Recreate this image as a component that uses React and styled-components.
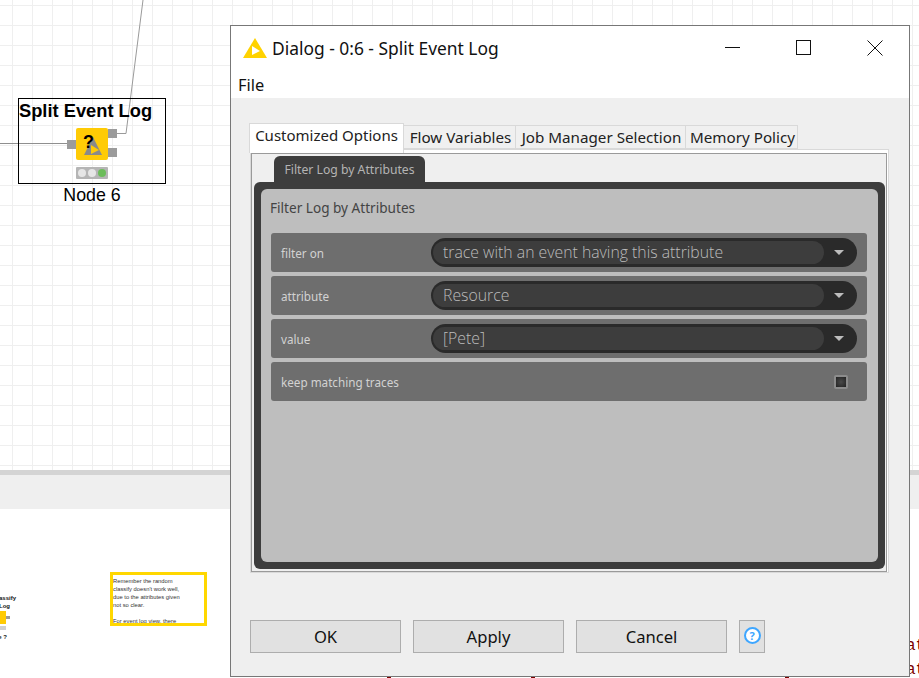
import React from "react";
import styled, { createGlobalStyle } from "styled-components";

const GlobalStyle = createGlobalStyle`
	html, body {
		margin: 0;
		padding: 0;
		background: #fff;
	}
	* {
		box-sizing: border-box;
	}
`;

const filas = [
    { nombre: "filter on", valor: "trace with an event having this attribute" },
    { nombre: "attribute", valor: "Resource" },
    { nombre: "value", valor: "[Pete]" },
];

const pestanas = [
    { nombre: "Flow Variables", ancho: 112 },
    { nombre: "Job Manager Selection", ancho: 170 },
    { nombre: "Memory Policy", ancho: 112 },
];

const NodoIcono = () => (
    <IconoNodo>
        <svg width="32" height="32" viewBox="0 0 32 32">
            <polygon points="17,9 26,27 8,27" fill="#8a8a8a" />
            <polygon points="15,17 23,22 15,26" fill="#ffcb05" />
        </svg>
        <Interrogacion>?</Interrogacion>
    </IconoNodo>
);

const App = () => {
    return (
        <Pagina>
            <GlobalStyle />
            <Lienzo>
                <Cables width="240" height="200" viewBox="0 0 240 200">
                    <path d="M0 143.5H67" stroke="#8f8f8f" fill="none" />
                    <path d="M116 133.5H126L143 0" stroke="#9a9a9a" fill="none" />
                </Cables>
                <CajaNodo>
                    <TituloNodo>Split Event Log</TituloNodo>
                    <FilaPuertos>
                        <Puerto />
                        <NodoIcono />
                        <PuertosDerecha>
                            <Puerto />
                            <Puerto />
                        </PuertosDerecha>
                    </FilaPuertos>
                    <Semaforo>
                        <Luz />
                        <Luz />
                        <Luz $verde />
                    </Semaforo>
                    <NombreNodo>Node 6</NombreNodo>
                </CajaNodo>
            </Lienzo>
            <Separador />
            <BandaClara />
            <ZonaBlanca>
                <NodoPequeno>
                    <b>classify</b>
                    <b>Log</b>
                    <FilaPequena>
                        <CuadroPequeno />
                        <PuertoPequeno />
                    </FilaPequena>
                    <SemaforoPequeno />
                    <b>e ?</b>
                </NodoPequeno>
                <Nota>
                    Remember the random<br />
                    classify doesn't work well,<br />
                    due to the attributes given<br />
                    not so clear.<br />
                    <br />
                    For event log view, there
                </Nota>
                <TextoRojo $arriba={636}>at</TextoRojo>
                <TextoRojo $arriba={660}>at</TextoRojo>
                <MarcaInferior $x={387} />
                <MarcaInferior $x={531} />
                <MarcaInferior $x={785} />
            </ZonaBlanca>

            <Dialogo>
                <BarraTitulo>
                    <svg width="26" height="22" viewBox="0 0 26 22">
                        <polygon points="13,1 25,21 1,21" fill="#ffd200" />
                        <polygon points="10,9 18,14 10,18" fill="#fff" />
                    </svg>
                    <Titulo>Dialog - 0:6 - Split Event Log</Titulo>
                    <ControlesVentana>
                        <svg width="16" height="16" viewBox="0 0 16 16">
                            <path d="M0 7.5H15" stroke="#111" fill="none" />
                        </svg>
                        <svg width="16" height="16" viewBox="0 0 16 16">
                            <rect x="0.5" y="0.5" width="14" height="14" stroke="#111" fill="none" />
                        </svg>
                        <svg width="16" height="16" viewBox="0 0 16 16">
                            <path d="M0.5 0.5L15.5 15.5M15.5 0.5L0.5 15.5" stroke="#111" fill="none" />
                        </svg>
                    </ControlesVentana>
                </BarraTitulo>
                <Menu>File</Menu>
                <Cuerpo>
                    <Pestanas>
                        <Pestana $activa $ancho={155}>Customized Options</Pestana>
                        {pestanas.map((p) => <Pestana key={p.nombre} $ancho={p.ancho}>{p.nombre}</Pestana>)}
                    </Pestanas>
                    <PanelExterior>
                        <PanelInterior>
                            <PestanaOscura>Filter Log by Attributes</PestanaOscura>
                            <MarcoOscuro>
                                <Formulario>
                                    <TituloFormulario>Filter Log by Attributes</TituloFormulario>
                                    {filas.map((f) => (
                                        <Fila key={f.nombre}>
                                            <Etiqueta>{f.nombre}</Etiqueta>
                                            <Combo>
                                                <ComboTexto>{f.valor}</ComboTexto>
                                                <Flecha />
                                            </Combo>
                                        </Fila>
                                    ))}
                                    <Fila>
                                        <Etiqueta>keep matching traces</Etiqueta>
                                        <Casilla />
                                    </Fila>
                                </Formulario>
                            </MarcoOscuro>
                        </PanelInterior>
                    </PanelExterior>
                    <Botones>
                        <Boton>OK</Boton>
                        <Boton>Apply</Boton>
                        <Boton>Cancel</Boton>
                        <BotonAyuda><Ayuda>?</Ayuda></BotonAyuda>
                    </Botones>
                </Cuerpo>
            </Dialogo>
        </Pagina>
    );
}

const Pagina = styled.div`
	position: relative;
	width: 919px;
	height: 678px;
	overflow: hidden;
	background: #fff;
	font-family: "Liberation Sans", Arial, sans-serif;
`;

const Lienzo = styled.div`
	position: relative;
	height: 470px;
	background-color: #fff;
	background-image:
		linear-gradient(to right, #efefef 1px, transparent 1px),
		linear-gradient(to bottom, #efefef 1px, transparent 1px);
	background-size: 20px 20px;
	background-position: 12px 5px;
`;

const Cables = styled.svg`
	position: absolute;
	left: 0;
	top: 0;
`;

const CajaNodo = styled.div`
	position: absolute;
	left: 18px;
	top: 98px;
	width: 148px;
	height: 86px;
	border: 1px solid #000;
	display: flex;
	flex-direction: column;
	align-items: center;
`;

const TituloNodo = styled.div`
	align-self: flex-start;
	font-size: 18.3px;
	font-weight: bold;
	line-height: 24px;
	color: #000;
	white-space: nowrap;
`;

const FilaPuertos = styled.div`
	display: flex;
	align-items: center;
	margin-top: 5px;
`;

const Puerto = styled.div`
	width: 9px;
	height: 9px;
	background: #9b9b9b;
`;

const PuertosDerecha = styled.div`
	display: flex;
	flex-direction: column;
	gap: 10px;
	margin-top: -2px;
`;

const IconoNodo = styled.div`
	position: relative;
	width: 32px;
	height: 32px;
	background: #ffcb05;
	border-radius: 2px;
`;

const Interrogacion = styled.span`
	position: absolute;
	left: 7px;
	top: 3px;
	font-size: 18px;
	font-weight: bold;
	line-height: 22px;
	color: #000;
`;

const Semaforo = styled.div`
	display: flex;
	align-items: center;
	justify-content: center;
	gap: 2px;
	width: 32px;
	height: 12px;
	margin-top: 7px;
	background: #b5b5b5;
	border-radius: 1px;
`;

const Luz = styled.div`
	width: 8px;
	height: 8px;
	border-radius: 50%;
	background: ${(props) => props.$verde ? "#6cbd5a" : "#e6e6e6"};
`;

const NombreNodo = styled.div`
	position: absolute;
	left: 0;
	right: 0;
	top: 84px;
	text-align: center;
	font-size: 17.8px;
	line-height: 24px;
	color: #000;
`;

const Separador = styled.div`
	height: 5px;
	background: #d4d4d4;
`;

const BandaClara = styled.div`
	height: 34px;
	background: #efefef;
`;

const ZonaBlanca = styled.div`
	height: 169px;
	background: #fff;
`;

const NodoPequeno = styled.div`
	position: absolute;
	left: -20px;
	width: 36px;
	top: 594px;
	display: flex;
	flex-direction: column;
	align-items: flex-end;
	font-size: 6px;
	line-height: 8px;
	color: #111;

	b:nth-child(2) {
		margin-right: 6px;
	}
	b:last-child {
		margin-right: 9px;
		margin-top: 3px;
	}
`;

const FilaPequena = styled.div`
	display: flex;
	align-items: center;
	margin-top: 1px;
	margin-right: 6px;
`;

const CuadroPequeno = styled.div`
	width: 13px;
	height: 13px;
	background: #ffcb05;
`;

const PuertoPequeno = styled.div`
	width: 4px;
	height: 3px;
	background: #9b9b9b;
`;

const SemaforoPequeno = styled.div`
	width: 13px;
	height: 4px;
	margin-top: 2px;
	margin-right: 10px;
	background: #d0d0d0;
`;

const Nota = styled.div`
	position: absolute;
	left: 110px;
	top: 572px;
	width: 97px;
	height: 54px;
	border: 3px solid #ffd700;
	padding: 2px 0 0 0;
	overflow: hidden;
	font-size: 5.8px;
	line-height: 8.1px;
	color: #333;
	white-space: nowrap;
	background: #fff;
`;

const TextoRojo = styled.div`
	position: absolute;
	left: 906px;
	top: ${(props) => props.$arriba}px;
	font-family: "Liberation Mono", monospace;
	font-size: 16px;
	line-height: 20px;
	color: #7a0000;
`;

const MarcaInferior = styled.div`
	position: absolute;
	left: ${(props) => props.$x}px;
	top: 677px;
	width: 4px;
	height: 1px;
	background: #7a0000;
`;

const Dialogo = styled.div`
	position: absolute;
	left: 230px;
	top: 25px;
	width: 680px;
	height: 652px;
	border: 1px solid #777;
	background: #fff;
	display: flex;
	flex-direction: column;
	font-family: "Noto Sans", "Open Sans", sans-serif;
	color: #111;
`;

const BarraTitulo = styled.div`
	display: flex;
	align-items: center;
	height: 47px;
	padding: 0 0 4px 11px;
	flex-shrink: 0;
`;

const Titulo = styled.div`
	margin-left: 4px;
	font-size: 17.4px;
	line-height: 24px;
	white-space: nowrap;
`;

const ControlesVentana = styled.div`
	display: flex;
	align-items: center;
	gap: 55px;
	margin-left: auto;
	margin-right: 26px;
`;

const Menu = styled.div`
	height: 25px;
	padding: 0 0 0 7px;
	font-size: 16.4px;
	line-height: 24px;
	flex-shrink: 0;
`;

const Cuerpo = styled.div`
	flex: 1;
	background: #efefef;
	padding: 25px 0 0 18px;
`;

const Pestanas = styled.div`
	display: flex;
	align-items: flex-end;
	height: 26px;
	position: relative;
	z-index: 1;
`;

const Pestana = styled.div`
	width: ${(props) => props.$ancho}px;
	height: ${(props) => props.$activa ? "30px" : "24px"};
	margin-bottom: ${(props) => props.$activa ? "-4px" : "0"};
	padding-left: ${(props) => props.$activa ? "0" : "2px"};
	background: ${(props) => props.$activa ? "#fff" : "#f0f0f0"};
	border: 1px solid #d9d9d9;
	border-bottom: ${(props) => props.$activa ? "none" : "1px solid #d9d9d9"};
	border-left: ${(props) => props.$activa ? "1px solid #d9d9d9" : "none"};
	font-size: ${(props) => props.$activa ? "15px" : "15.2px"};
	line-height: 23px;
	text-align: center;
	white-space: nowrap;
	color: #222;
`;

const PanelExterior = styled.div`
	width: 639px;
	height: 424px;
	margin-left: 1px;
	padding: 3px 1px 0 0;
	background: #fff;
	border: 1px solid #d9d9d9;
`;

const PanelInterior = styled.div`
	height: 419px;
	border: 1px solid #9a9a9a;
	background: #efefef;
	padding: 2px 1px 0 2px;
	display: flex;
	flex-direction: column;
	position: relative;
	z-index: 2;
`;

const PestanaOscura = styled.div`
	width: 151px;
	height: 26px;
	margin-left: 20px;
	border-radius: 6px 6px 0 0;
	background: #3d3d3d;
	color: #b4b4b4;
	font-size: 12.2px;
	line-height: 27px;
	text-align: center;
	flex-shrink: 0;
`;

const MarcoOscuro = styled.div`
	width: 631px;
	height: 387px;
	padding: 7px;
	border-radius: 6px;
	background: #3d3d3d;
`;

const Formulario = styled.div`
	height: 373px;
	padding: 0 11px 0 10px;
	border-radius: 6px;
	background: #bebebe;
	display: flex;
	flex-direction: column;
	gap: 4px;
`;

const TituloFormulario = styled.div`
	height: 40px;
	padding: 9px 0 0 0;
	margin-left: -1px;
	font-size: 13.6px;
	line-height: 20px;
	color: #444;
`;

const Fila = styled.div`
	display: flex;
	align-items: center;
	height: 39px;
	padding: 0 10px;
	border-radius: 3px;
	background: #6e6e6e;
	color: #d2d2d2;
	font-size: 11.7px;
	flex-shrink: 0;
`;

const Etiqueta = styled.div`
	width: 150px;
	padding-top: 1px;
	flex-shrink: 0;
`;

const Combo = styled.div`
	display: flex;
	align-items: center;
	width: 426px;
	height: 29px;
	padding-left: 2px;
	border-radius: 15px;
	background: #2a2a2a;
`;

const ComboTexto = styled.div`
	width: 391px;
	height: 23px;
	padding-left: 10px;
	border-radius: 12px;
	background: #3d3d3d;
	color: #bcbcbc;
	font-family: "Open Sans", sans-serif;
	font-weight: 300;
	font-size: 15.8px;
	line-height: 23px;
	white-space: nowrap;
`;

const Flecha = styled.div`
	width: 0;
	height: 0;
	margin-left: 10px;
	border-left: 5px solid transparent;
	border-right: 5px solid transparent;
	border-top: 5px solid #bdbdbd;
`;

const Casilla = styled.div`
	width: 14px;
	height: 14px;
	margin-left: auto;
	margin-right: 9px;
	border: 2px solid #8c8c8c;
	border-radius: 2px;
	background: radial-gradient(circle, #4a4a4a, #222);
`;

const Botones = styled.div`
	display: flex;
	gap: 12px;
	margin: 47px 0 0 1px;
`;

const Boton = styled.button`
	width: 151px;
	height: 33px;
	padding: 0;
	background: #e1e1e1;
	border: 1px solid #adadad;
	font-family: "Noto Sans", "Open Sans", sans-serif;
	font-size: 16.6px;
	color: #111;
`;

const BotonAyuda = styled(Boton)`
	width: 26px;
	display: flex;
	align-items: center;
	justify-content: center;
`;

const Ayuda = styled.span`
	display: block;
	width: 17px;
	height: 17px;
	margin-top: -2px;
	border: 2px solid #3ea6ff;
	border-radius: 50%;
	background: #fff;
	color: #3ea6ff;
	font-size: 11px;
	font-weight: bold;
	line-height: 13px;
	text-align: center;
`;

export default App;
